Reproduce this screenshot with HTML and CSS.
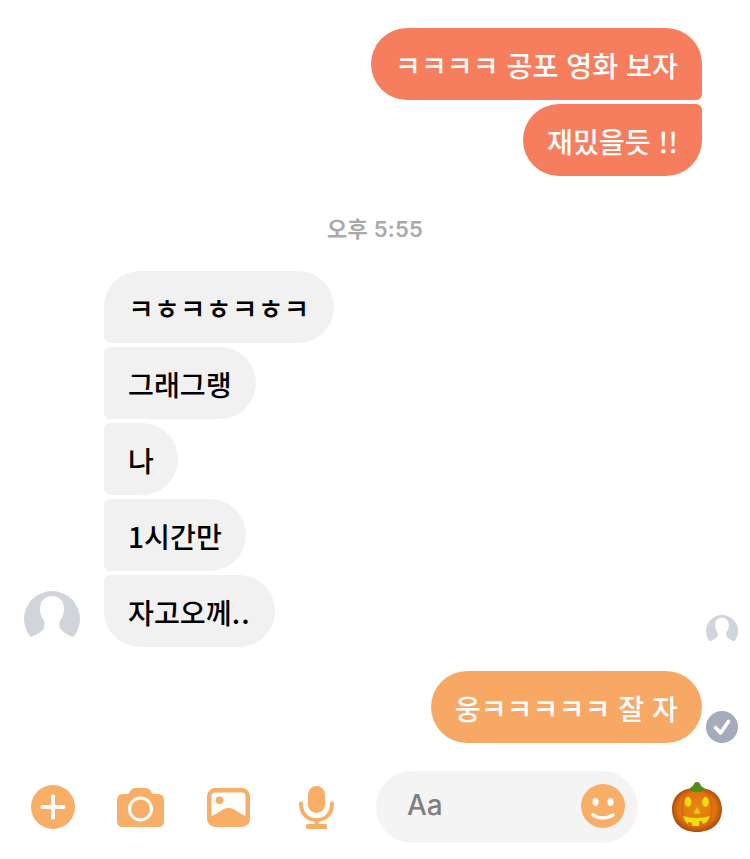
FILE: index.html
```html
<!DOCTYPE html>
<html lang="ko">
<head>
    <meta charset="UTF-8">
    <meta name="viewport" content="width=device-width, initial-scale=1.0">
    <title>Chat</title>
    <link rel="stylesheet" href="styles.css">
</head>
<body>
    <div class="chat">
        <div class="group-out">
            <div class="bubble out coral first">ㅋㅋㅋㅋ 공포 영화 보자</div>
            <div class="bubble out coral last">재밌을듯 !!</div>
        </div>

        <div class="time">오후 5:55</div>

        <div class="group-in">
            <svg class="avatar" viewBox="0 0 56 56">
                <use href="#person"></use>
            </svg>
            <div class="bubbles-in">
                <div class="bubble in first">ㅋㅎㅋㅎㅋㅎㅋ</div>
                <div class="bubble in middle">그래그랭</div>
                <div class="bubble in middle">나</div>
                <div class="bubble in middle">1시간만</div>
                <div class="bubble in last"><span>자고오께<span class="dots">..</span></span></div>
            </div>
            <svg class="seen" viewBox="0 0 56 56">
                <use href="#person"></use>
            </svg>
        </div>

        <div class="row-out">
            <div class="bubble out orange">웅ㅋㅋㅋㅋㅋ 잘 자</div>
            <svg class="check" viewBox="0 0 32 32">
                <circle cx="16" cy="16" r="16" fill="#a5acb9"></circle>
                <path d="M9.5 16.5l5 5.5 8-11.5" fill="none" stroke="#fff" stroke-width="3.6" stroke-linecap="round" stroke-linejoin="round"></path>
            </svg>
        </div>
    </div>

    <div class="composer">
        <svg class="icon plus" viewBox="0 0 44 44">
            <circle cx="22" cy="22" r="22" fill="#f9ae67"></circle>
            <path d="M22 11.500v21M11.500 22h21" stroke="#fff" stroke-width="4" stroke-linecap="round"></path>
        </svg>
        <svg class="icon camera" viewBox="0 0 47 39">
            <path d="M6 6h5.500l2-3.500q1.500-2.500 4.500-2.500h11q3 0 4.500 2.500l2 3.500h5.500q6 0 6 6v21q0 6-6 6h-35q-6 0-6-6v-21q0-6 6-6z" fill="#f9ae67"></path>
            <circle cx="23.500" cy="21" r="11" fill="none" stroke="#fff" stroke-width="3"></circle>
        </svg>
        <svg class="icon picture" viewBox="0 0 43 39">
            <rect x="2.250" y="2.250" width="38.500" height="34.500" rx="6" fill="#fff" stroke="#f9ae67" stroke-width="4.500"></rect>
            <circle cx="12.500" cy="12.300" r="3.800" fill="#f9ae67"></circle>
            <path d="M4 28c6-1 11-8 17.500-8s12 7 17.500 8v6q0 3-3 3h-29q-3 0-3-3z" fill="#f9ae67"></path>
        </svg>
        <svg class="icon mic" viewBox="0 0 35 43">
            <rect x="9" y="0" width="17" height="27" rx="8.500" fill="#f9ae67"></rect>
            <path d="M2 17.500c0 10 6 16.500 15.500 16.500s15.500-6.500 15.500-16.500" fill="none" stroke="#f9ae67" stroke-width="4" stroke-linecap="round"></path>
            <path d="M17.500 34v5" stroke="#f9ae67" stroke-width="4"></path>
            <rect x="7" y="38" width="21" height="5" rx="1.500" fill="#f9ae67"></rect>
        </svg>
        <div class="input">
            <span class="placeholder">Aa</span>
            <svg class="smile" viewBox="0 0 44 44">
                <circle cx="22" cy="22" r="22" fill="#f9ae67"></circle>
                <ellipse cx="14.500" cy="18" rx="3" ry="4" fill="#fff"></ellipse>
                <ellipse cx="29.500" cy="18" rx="3" ry="4" fill="#fff"></ellipse>
                <path d="M12 31q10 6 20 0" fill="none" stroke="#fff" stroke-width="3.400" stroke-linecap="round"></path>
            </svg>
        </div>
        <svg class="pumpkin" viewBox="0 0 50 50">
            <defs>
                <radialGradient id="skin" cx="50%" cy="48%" r="56%">
                    <stop offset="0" stop-color="#ea8a12"></stop>
                    <stop offset="0.68" stop-color="#e0720e"></stop>
                    <stop offset="1" stop-color="#98400f"></stop>
                </radialGradient>
            </defs>
            <path d="M25 6c16-1 25 9 25 21 0 14-10 23-25 23s-25-9-25-23c0-12 9-22 25-21z" fill="url(#skin)"></path>
            <path d="M18 7q-9 9-8 21t8 21M32 7q9 9 8 21t-8 21" fill="none" stroke="#c25a10" stroke-width="1.200" opacity="0.6"></path>
            <path d="M18 7q0-2 3-3 1-4 4-4t4 4q3 1 3 3-1 2-3 3-4-1-8 0-2-1-3-3z" fill="#4f8d1f"></path>
            <ellipse cx="16" cy="20" rx="3.400" ry="5" fill="#eedb10"></ellipse>
            <ellipse cx="33.500" cy="20" rx="3.400" ry="5" fill="#eedb10"></ellipse>
            <path d="M25 25l3.500 6.500h-7z" fill="#f0cb10"></path>
            <path d="M11 34q14 4 27 0-1 5-7 8l-1-3h-3v5h-7v-3l-4-1v2q-4-3-5-8z" fill="#efdf10"></path>
        </svg>
    </div>

    <svg class="defs" width="0" height="0">
        <symbol id="person" viewBox="0 0 56 56">
            <circle cx="28" cy="28" r="28" fill="#d2d4dc"></circle>
            <path d="M28 5c-8 0-12 6-12 13 0 5 1.500 8 3.500 11 1.500 2.500 1.500 5 .5 8-2 4-8 7-14 9.500v9.500h44v-9.500c-6-2.500-12-5.500-14-9.500-1-3-1-5.500 .5-8 2-3 3.500-6 3.500-11 0-7-4-13-12-13z" fill="#fff"></path>
        </symbol>
    </svg>
</body>
</html>
```

FILE: styles.css
```css
body {
    margin: 0;
    background: white;
    font-family: "Noto Sans CJK KR", "Noto Sans", sans-serif;
    overflow: hidden;
}
.chat {
    padding: 28px 12px 0 24px;
}
.group-out {
    display: flex;
    flex-direction: column;
    align-items: flex-end;
    gap: 4px;
    padding-right: 36px;
}
.bubble {
    box-sizing: border-box;
    height: 72px;
    padding: 0 24px;
    border-radius: 36px;
    display: flex;
    align-items: center;
    font-size: 28.2px;
    font-weight: 500;
    white-space: nowrap;
}
.dots {
    letter-spacing: 1px;
}
.out {
    color: white;
}
.coral {
    background: #f67e5e;
}
.orange {
    background: #f8a865;
}
.out.first {
    border-bottom-right-radius: 6px;
}
.out.last {
    border-top-right-radius: 6px;
}
.in {
    background: #f1f1f1;
    color: black;
}
.in.first {
    border-bottom-left-radius: 6px;
}
.in.middle {
    border-radius: 6px 36px 36px 6px;
}
.in.last {
    border-top-left-radius: 6px;
}
.time {
    margin: 39px 0 28px 0;
    padding-right: 12px;
    text-align: center;
    font-family: "Inter", "Noto Sans CJK KR", sans-serif;
    font-size: 22px;
    line-height: 28px;
    font-weight: 600;
    letter-spacing: 0.2px;
    color: #aaaaaa;
}
.group-in {
    display: flex;
    align-items: flex-end;
}
.avatar {
    width: 56px;
    height: 56px;
}
.bubbles-in {
    display: flex;
    flex-direction: column;
    align-items: flex-start;
    gap: 4px;
    margin-left: 24px;
}
.seen {
    width: 32px;
    height: 32px;
    margin-left: auto;
}
.row-out {
    display: flex;
    justify-content: flex-end;
    align-items: flex-end;
    gap: 4px;
    margin-top: 24px;
}
.check {
    width: 32px;
    height: 32px;
}
.composer {
    display: flex;
    align-items: center;
    height: 72px;
    margin-top: 28px;
    padding-left: 31px;
}
.icon {
    flex: none;
}
.plus {
    width: 44px;
    height: 44px;
}
.camera {
    width: 47px;
    height: 39px;
    margin-left: 42px;
}
.picture {
    width: 43px;
    height: 39px;
    margin-left: 43px;
}
.mic {
    width: 35px;
    height: 43px;
    margin-left: 49px;
}
.input {
    box-sizing: border-box;
    width: 262px;
    height: 72px;
    margin-left: 42px;
    padding: 0 13px 0 31px;
    border-radius: 36px;
    background: #f4f4f4;
    display: flex;
    align-items: center;
    justify-content: space-between;
}
.placeholder {
    font-family: "Inter", sans-serif;
    font-size: 28px;
    font-weight: 500;
    line-height: 28px;
    color: #808080;
    margin-top: -4px;
}
.smile {
    width: 44px;
    height: 44px;
    margin-top: -2px;
}
.pumpkin {
    width: 50px;
    height: 50px;
    margin-left: 34px;
}
.defs {
    display: block;
}
```
